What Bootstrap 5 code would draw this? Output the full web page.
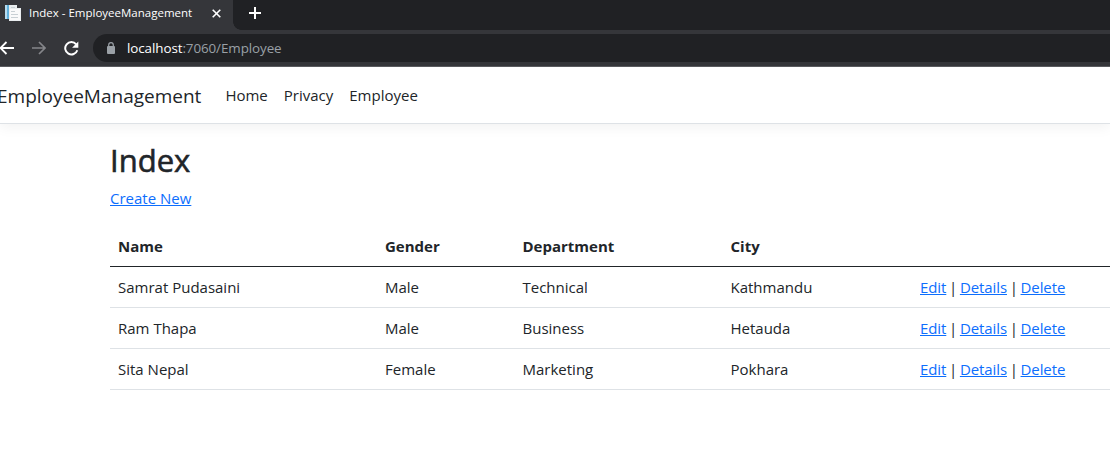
<!DOCTYPE html>
<html lang="en">
<head>
<meta charset="utf-8">
<title>Index - EmployeeManagement</title>
<link href="https://cdn.jsdelivr.net/npm/bootstrap@5.3.0/dist/css/bootstrap.min.css" rel="stylesheet">
<style>
body{font-family:"Open Sans","Noto Sans",sans-serif;font-size:15px;line-height:24px;height:462px;overflow:hidden}
.tabstrip{height:30px;background:#202124}
.tab{width:233px;height:30px;background:#35363a;color:#fff;font-size:11.5px;letter-spacing:0;padding-left:5px;line-height:26px;position:relative}
.tab::after{content:"";position:absolute;left:100%;bottom:0;width:8px;height:8px;background:radial-gradient(circle at 100% 0,transparent 7.5px,#35363a 8px)}
.tab svg,.toolbar svg,.plus{display:block;flex:none}
.toolbar{height:37px;background:#35363a;border-bottom:1px solid #5b5c60}
.omni{height:28px;margin-left:14px;background:#202124;border-radius:14px 0 0 14px;color:#9aa0a6;font-size:13.4px;letter-spacing:-.08px;padding-left:13px}
.site-nav{height:57px;padding:0;border-bottom:1px solid #dee2e6;box-shadow:0 4px 12px rgba(0,0,0,.05)}
.navbar-brand{font-size:19px;color:#212529;margin:1px 16px 0 -3px;padding:0}
.site-nav .nav-link{color:#212529;padding:0 8px}
.page{padding:16px 0 0 110px}
.page h1{font-size:31px;line-height:38.4px;padding-top:1px;font-weight:500;-webkit-text-stroke:.6px #212529;margin-bottom:7px}
.page p{margin-bottom:16px}
a{color:#0d6efd}
.employees{width:1000px;table-layout:fixed}
.employees thead th{border-bottom-color:#212529}
.employees th,.employees td{white-space:nowrap}
.employees td:last-child{word-spacing:-1.1px;letter-spacing:-.09px}
</style>
<script src="https://cdn.jsdelivr.net/npm/bootstrap@5.3.0/dist/js/bootstrap.bundle.min.js"></script>
</head>
<body>
<div class="tabstrip d-flex">
  <div class="tab d-flex">
    <svg width="16" height="17" viewBox="0 0 16 17" style="margin-top:4px"><path fill="#e9edef" d="M0 1h12v3h4v13H4v-2H0z"/><path fill="#60b0dc" d="M0 1h4v14H0z"/><path fill="#b7dcef" d="M0 1h2v14H0z"/><path fill="#fafafa" d="M5 5h10v11H5z"/><path stroke="#c9d0d4" d="M6 3.500h4M6 7.500h4M6 10.500h7M6 13.500h7"/></svg>
    <span class="title ms-2">Index - EmployeeManagement</span>
    <svg class="ms-auto" width="9" height="9" viewBox="0 0 9 9" style="margin:9px 12px 0 0"><path d="M.7.7l7.600 7.600M8.300.7L.7 8.300" stroke="#fff" stroke-width="1.600"/></svg>
  </div>
  <svg class="plus" width="12" height="12" viewBox="0 0 12 12" style="margin:7px 0 0 16px"><path d="M6 0v12M0 6h12" stroke="#fff" stroke-width="2"/></svg>
</div>
<div class="toolbar d-flex align-items-center">
  <svg width="14" height="14" viewBox="0 0 14 14" fill="none" stroke="#fff" stroke-width="1.800"><path d="M14 7H.5M6.500 1l-6 6 6 6"/></svg>
  <svg width="14" height="14" viewBox="0 0 14 14" fill="none" stroke="#85868a" stroke-width="1.700" style="margin-left:18px"><path d="M0 7h13M7 1l6 6-6 6"/></svg>
  <svg width="15" height="15" viewBox="0 0 15 15" style="margin-left:18px"><path d="M12.200 3.300A6.200 6.200 0 1 0 13.300 9.200" fill="none" stroke="#fff" stroke-width="2"/><path d="M14.300.5v6.200H8.100z" fill="#fff"/></svg>
  <div class="omni flex-grow-1 d-flex align-items-center">
    <svg width="10" height="12" viewBox="0 0 10 12"><rect x="1" y="4" width="8" height="8" rx="1" fill="#9aa0a6"/><path d="M2.700 4.500V3a2.300 2.300 0 0 1 4.600 0v1.500" fill="none" stroke="#9aa0a6" stroke-width="1.200"/></svg>
    <span class="url" style="margin-left:11px"><span class="text-white">localhost</span>:7060/Employee</span>
  </div>
</div>
<header class="navbar site-nav bg-white d-flex flex-nowrap justify-content-start">
  <a class="navbar-brand" href="#">EmployeeManagement</a>
  <nav class="d-flex"><a class="nav-link" href="#">Home</a><a class="nav-link" href="#">Privacy</a><a class="nav-link" href="#">Employee</a></nav>
</header>
<main class="page">
  <h1>Index</h1>
  <p><a href="#">Create New</a></p>
  <table class="table employees">
    <colgroup><col style="width:267px"><col style="width:137.500px"><col style="width:208px"><col style="width:189.500px"><col></colgroup>
    <thead><tr><th>Name</th><th>Gender</th><th>Department</th><th>City</th><th></th></tr></thead>
    <tbody>
      <tr><td>Samrat Pudasaini</td><td>Male</td><td>Technical</td><td>Kathmandu</td><td><a href="#">Edit</a> | <a href="#">Details</a> | <a href="#">Delete</a></td></tr>
      <tr><td>Ram Thapa</td><td>Male</td><td>Business</td><td>Hetauda</td><td><a href="#">Edit</a> | <a href="#">Details</a> | <a href="#">Delete</a></td></tr>
      <tr><td>Sita Nepal</td><td>Female</td><td>Marketing</td><td>Pokhara</td><td><a href="#">Edit</a> | <a href="#">Details</a> | <a href="#">Delete</a></td></tr>
    </tbody>
  </table>
</main>
</body>
</html>
